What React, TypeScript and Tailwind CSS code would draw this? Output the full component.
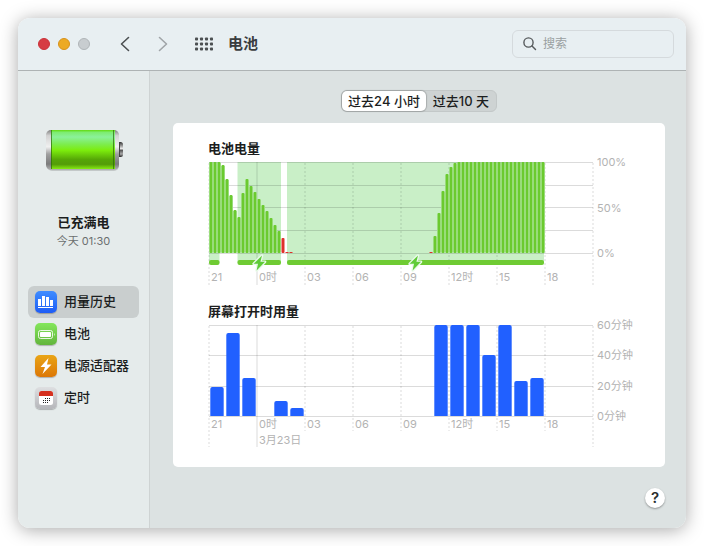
import React from "react";

const levels: number[] = [
  162, 162, 162, 165, 179, 195, 210, 217, 193, 179, 186, 192, 199, 205, 211, 218, 225, 231, 238, 252, 252,
];
const risingLevels: number[] = [252, 236, 213, 191, 174, 167, 163];

type Bar = { x: number; y: number; low: boolean };

const batteryBars: Bar[] = [
  ...levels.map((y, i) => ({ x: 1 + i * 4, y: y - 162, low: i >= 18 })),
  ...risingLevels.map((y, i) => ({ x: 221 + i * 4, y: y - 162, low: i === 0 })),
  ...Array.from({ length: 22 }, (_, i) => ({ x: 249 + i * 4, y: 0, low: false })),
];

const screenBars = [
  { hour: 0, minutes: 19 },
  { hour: 1, minutes: 55 },
  { hour: 2, minutes: 25 },
  { hour: 4, minutes: 10 },
  { hour: 5, minutes: 5 },
  { hour: 14, minutes: 60 },
  { hour: 15, minutes: 60 },
  { hour: 16, minutes: 60 },
  { hour: 17, minutes: 40 },
  { hour: 18, minutes: 60 },
  { hour: 19, minutes: 23 },
  { hour: 20, minutes: 25 },
];

const hours = ["21", "0时", "03", "06", "09", "12时", "15", "18", ""];

const charging = [
  { x: 1, w: 10.5 },
  { x: 29.5, w: 43.5 },
  { x: 79, w: 257 },
];

const chartText = "fill-[#b3b3b3] text-[11px]";

function HourLines({ bottom, tall }: { bottom: number; tall: number }) {
  return (
    <g>
      {hours.map((_, i) =>
        i === 1 ? (
          <rect key={i} x={48} y={0} width={2} height={tall} fill="#000" fillOpacity={0.07} />
        ) : (
          <line
            key={i}
            x1={1 + i * 48}
            x2={1 + i * 48}
            y1={1}
            y2={i === 0 || i === 8 ? tall : bottom}
            stroke="#000"
            strokeOpacity={0.07}
            strokeWidth={2}
            strokeDasharray="2 2"
          />
        ),
      )}
    </g>
  );
}

function HourLabels({ y }: { y: number }) {
  return (
    <g>
      {hours.map((h, i) => (
        <text key={i} x={3 + i * 48} y={y} className={chartText}>
          {h}
        </text>
      ))}
    </g>
  );
}

function Bolt({ x }: { x: number }) {
  return (
    <path
      transform={`translate(${x} 93)`}
      d="M9 0.5 L0.6 8.8 H5 L3.6 15.5 L12 6.8 H7.4 Z"
      fill="#5fcb38"
      stroke="#e9faea"
      strokeWidth={2.6}
      strokeLinejoin="round"
      paintOrder="stroke"
    />
  );
}

function BatteryChart() {
  return (
    <svg viewBox="0 0 440 126" className="block h-auto w-full overflow-visible" role="img" aria-label="电池电量">
      {charging.map((c) => (
        <rect key={c.x} x={c.x} y={0} width={c.w} height={101} fill="#c9efc7" />
      ))}
      {[0, 23, 45, 68, 91].map((y) => (
        <rect key={y} x={1} y={y} width={384} height={1} fill="#000" fillOpacity={0.14} />
      ))}
      <HourLines bottom={123} tall={123} />
      {batteryBars.map((b) => (
        <g key={b.x}>
          {!b.low && <rect x={b.x} y={b.y + 1} width={4} height={90 - b.y} fill="#c9efc7" />}
          <rect
            x={b.x + 0.5}
            y={b.y}
            width={3}
            height={91 - b.y}
            rx={b.y < 88 ? 1 : 0}
            fill={b.low ? "#e0302c" : "#6bca2f"}
          />
        </g>
      ))}
      {charging.map((c) => (
        <rect key={c.x} x={c.x} y={98} width={c.w} height={5} rx={2} fill="#6fcb33" />
      ))}
      <Bolt x={45} />
      <Bolt x={201} />
      <HourLabels y={119} />
      <text x={389} y={4} className={chartText}>100%</text>
      <text x={389} y={50} className={chartText}>50%</text>
      <text x={389} y={95} className={chartText}>0%</text>
    </svg>
  );
}

function ScreenChart() {
  return (
    <svg viewBox="0 0 440 124" className="block h-auto w-full overflow-visible" role="img" aria-label="屏幕打开时用量">
      {[0, 30, 61, 91].map((y) => (
        <rect key={y} x={1} y={y} width={384} height={1} fill="#000" fillOpacity={0.14} />
      ))}
      <HourLines bottom={106} tall={122} />
      {screenBars.map((b) => {
        const h = Math.round((b.minutes * 91) / 60);
        const x = 2 + b.hour * 16;
        return (
          <path
            key={b.hour}
            d={`M${x + 0.3} 91 V${93 - h} q0 -2 2 -2 h9.4 q2 0 2 2 V91 Z`}
            fill="#2160ff"
          />
        );
      })}
      <HourLabels y={103} />
      <text x={51} y={119} className={chartText}>3月23日</text>
      <text x={389} y={4} className={chartText}>60分钟</text>
      <text x={389} y={34} className={chartText}>40分钟</text>
      <text x={389} y={65} className={chartText}>20分钟</text>
      <text x={389} y={95} className={chartText}>0分钟</text>
    </svg>
  );
}

function BatteryPicture() {
  return (
    <svg width="80" height="44" viewBox="0 0 80 44" aria-hidden="true">
      <defs>
        <linearGradient id="green" x1="0" y1="0" x2="0" y2="1">
          <stop offset="0" stopColor="#62d90f" />
          <stop offset="0.06" stopColor="#7ded70" />
          <stop offset="0.18" stopColor="#8bf19a" />
          <stop offset="0.36" stopColor="#7ded50" />
          <stop offset="0.52" stopColor="#7cec0d" />
          <stop offset="0.76" stopColor="#55a607" />
          <stop offset="0.88" stopColor="#549c08" />
          <stop offset="1" stopColor="#86ec12" />
        </linearGradient>
        <linearGradient id="metal" x1="0" y1="0" x2="0" y2="1">
          <stop offset="0" stopColor="#828282" />
          <stop offset="0.14" stopColor="#d2d2d2" />
          <stop offset="0.42" stopColor="#f0f0f0" />
          <stop offset="0.6" stopColor="#a0a0a0" />
          <stop offset="0.85" stopColor="#7b7b7b" />
          <stop offset="1" stopColor="#b4b4b4" />
        </linearGradient>
        <linearGradient id="cap" x1="0" y1="0" x2="0" y2="1">
          <stop offset="0" stopColor="#333" />
          <stop offset="0.25" stopColor="#999" />
          <stop offset="0.45" stopColor="#eee" />
          <stop offset="0.55" stopColor="#555" />
          <stop offset="0.8" stopColor="#aaa" />
          <stop offset="1" stopColor="#222" />
        </linearGradient>
      </defs>
      <rect x="3" y="3" width="72" height="40" rx="5" fill="#000" fillOpacity="0.15" />
      <rect x="72" y="14" width="7" height="15" rx="2.5" fill="url(#cap)" />
      <rect x="2" y="2" width="73" height="40" rx="5" fill="url(#metal)" />
      <rect x="7" y="2" width="64" height="39" fill="url(#green)" />
      <rect x="7" y="2" width="1" height="39" fill="#2b6a08" fillOpacity="0.7" />
      <rect x="69" y="2" width="1" height="39" fill="#2b6a08" fillOpacity="0.7" />
      <rect x="75" y="15" width="1" height="13" fill="#444" />
    </svg>
  );
}

function UsageGlyph() {
  return (
    <svg width="22" height="22" viewBox="0 0 22 22" fill="#fff" aria-hidden="true">
      <rect x="3" y="8" width="3" height="7" />
      <rect x="7" y="5" width="3" height="10" />
      <rect x="11" y="6" width="3" height="9" />
      <rect x="15" y="9" width="3" height="6" />
      <rect x="3" y="16" width="15" height="1" />
    </svg>
  );
}

function BatteryGlyph() {
  return (
    <svg width="22" height="22" viewBox="0 0 22 22" aria-hidden="true">
      <rect x="3.5" y="7.5" width="14" height="8" rx="2" fill="none" stroke="#fff" strokeOpacity="0.85" />
      <rect x="5" y="9" width="11" height="5" rx="0.8" fill="#fff" />
      <path d="M19 10v3q1.3-1.5 0-3Z" fill="#fff" />
    </svg>
  );
}

function AdapterGlyph() {
  return (
    <svg width="22" height="22" viewBox="0 0 22 22" fill="#fff" aria-hidden="true">
      <path d="M13.5 3 L5.5 12 H10 L7.5 19 L16.5 9.5 H12 Z" />
    </svg>
  );
}

const scheduleDots = [
  [10, 11], [12, 11], [14, 11],
  [8, 13], [10, 13], [12, 13], [14, 13],
  [8, 15], [10, 15], [12, 15],
];

function ScheduleGlyph() {
  return (
    <svg width="22" height="22" viewBox="0 0 22 22" aria-hidden="true">
      <rect x="4" y="4" width="14" height="14" rx="2.5" fill="#fff" />
      <path d="M4 9V6.500q0-2.500 2.500-2.500h9q2.500 0 2.500 2.500V9Z" fill="#d5301f" />
      {scheduleDots.map(([x, y]) => (
        <rect key={`${x}-${y}`} x={x} y={y} width="1" height="1" fill="#222" />
      ))}
    </svg>
  );
}

const navItems = [
  { label: "用量历史", tint: "bg-linear-to-b from-[#3f8cff] to-[#1f5cf5]", glyph: <UsageGlyph />, active: true },
  { label: "电池", tint: "bg-linear-to-b from-[#84e75c] to-[#62b53c]", glyph: <BatteryGlyph />, active: false },
  { label: "电源适配器", tint: "bg-linear-to-b from-[#e9a516] to-[#dc7706]", glyph: <AdapterGlyph />, active: false },
  { label: "定时", tint: "bg-linear-to-b from-[#dedfe1] to-[#b5b6ba]", glyph: <ScheduleGlyph />, active: false },
];

function Toolbar() {
  return (
    <header className="flex h-[53px] shrink-0 items-center border-b border-[#aeb3b4] bg-[#e8eff2] pr-3 pl-5">
      <div className="flex gap-2">
        <button aria-label="关闭" className="size-3 rounded-full border border-[#cb3239] bg-[#d63c43]" />
        <button aria-label="最小化" className="size-3 rounded-full border border-[#d8921a] bg-[#ecaa24]" />
        <button aria-label="缩放" className="size-3 rounded-full border border-[#b0b5b8] bg-[#c8cdd0]" />
      </div>
      <button aria-label="后退" className="ml-[29px]">
        <svg width="12" height="16" viewBox="0 0 12 16" fill="none" stroke="#4c5052" strokeWidth="1.6" strokeLinecap="round" strokeLinejoin="round">
          <path d="M9.500 1.500 L2.500 8 L9.500 14.500" />
        </svg>
      </button>
      <button aria-label="前进" className="ml-[26px]">
        <svg width="12" height="16" viewBox="0 0 12 16" fill="none" stroke="#a0a5a8" strokeWidth="1.6" strokeLinecap="round" strokeLinejoin="round">
          <path d="M2.500 1.500 L9.500 8 L2.500 14.500" />
        </svg>
      </button>
      <button aria-label="显示全部" className="ml-[26px]">
        <svg width="18" height="14" viewBox="0 0 18 14" fill="#4c5052">
          {[0, 5, 10].map((y) =>
            [0, 5, 10, 15].map((x) => <rect key={`${x}-${y}`} x={x} y={y + 0.5} width="3" height="3" rx="0.8" />),
          )}
        </svg>
      </button>
      <h1 className="ml-[15px] text-[15px] leading-5 font-bold text-[#3a3d3f]">电池</h1>
      <label className="ml-auto flex h-7 w-[162px] items-center gap-1.5 rounded-md border border-[#d5dadd] pl-[10px]">
        <svg width="14" height="14" viewBox="0 0 14 14" fill="none" stroke="#55595b" strokeWidth="1.4" strokeLinecap="round" className="shrink-0" aria-hidden="true">
          <circle cx="5.500" cy="5.500" r="4.600" />
          <path d="M9 9 L12.500 12.500" />
        </svg>
        <input
          type="search"
          aria-label="搜索"
          placeholder="搜索"
          className="w-full min-w-0 bg-transparent text-[12px] outline-none placeholder:text-[#9a9fa1]"
        />
      </label>
    </header>
  );
}

function Sidebar() {
  return (
    <aside className="flex w-[132px] shrink-0 flex-col border-r border-[#ced3d3] bg-[#e5ebeb] px-[10px] pt-[57px]">
      <div className="flex flex-col items-center">
        <BatteryPicture />
        <p className="mt-10 text-[13px] leading-5 font-bold text-[#1c1e1e]">已充满电</p>
        <p className="text-[11px] leading-[18px] text-[#6b6f6f]">今天 01:30</p>
      </div>
      <nav className="mt-9 flex flex-col">
        {navItems.map((item) => (
          <a
            key={item.label}
            href="#"
            className={
              item.active
                ? "flex h-8 items-center gap-[7px] rounded-md bg-[#c9cece] pl-[7px]"
                : "flex h-8 items-center gap-[7px] rounded-md pl-[7px]"
            }
          >
            <span className={`size-[22px] shrink-0 rounded-[5px] shadow-[0_1px_1px_rgba(0,0,0,0.25)] ${item.tint}`}>
              {item.glyph}
            </span>
            <span className="pb-0.5 text-[13px] leading-5 font-medium whitespace-nowrap text-[#1c1e1e]">{item.label}</span>
          </a>
        ))}
      </nav>
    </aside>
  );
}

export default function App() {
  return (
    <div className="flex min-h-screen bg-white p-[18px] font-[Inter,'Noto_Sans_CJK_SC',sans-serif]">
      <div className="flex flex-1 flex-col overflow-hidden rounded-xl shadow-[0_2px_18px_rgba(0,0,0,0.34)]">
        <Toolbar />
        <div className="flex flex-1">
          <Sidebar />
          <main className="flex min-w-0 flex-1 flex-col bg-[#dce2e2] pt-[19px] pr-[21px] pb-5 pl-[23px]">
            <div className="flex h-[22px] self-center rounded-md border border-[#c3c8c8] bg-[#ced3d3] text-[13px] leading-5 font-medium whitespace-nowrap text-[#1c1e1e]">
              <button className="w-[84px] rounded-[5px] bg-white shadow-[0_0_1px_1px_rgba(0,0,0,0.18)]">过去24 小时</button>
              <button className="w-[70px]">过去10 天</button>
            </div>
            <section className="mt-[11px] rounded-[5px] bg-white pt-4 pr-[17px] pb-[18px] pl-[35px]">
              <h2 className="text-[13px] leading-[18px] font-bold text-[#1c1e1e]">电池电量</h2>
              <div className="pt-[5px]">
                <BatteryChart />
              </div>
              <h2 className="mt-[14px] text-[13px] leading-[18px] font-bold text-[#1c1e1e]">屏幕打开时用量</h2>
              <div className="pt-[5px]">
                <ScreenChart />
              </div>
            </section>
            <button
              aria-label="帮助"
              className="mt-auto size-5 self-end rounded-full bg-white text-[15px] leading-5 font-semibold text-[#2b2d2d] shadow-[0_1px_2px_rgba(0,0,0,0.35)]"
            >
              ?
            </button>
          </main>
        </div>
      </div>
    </div>
  );
}
